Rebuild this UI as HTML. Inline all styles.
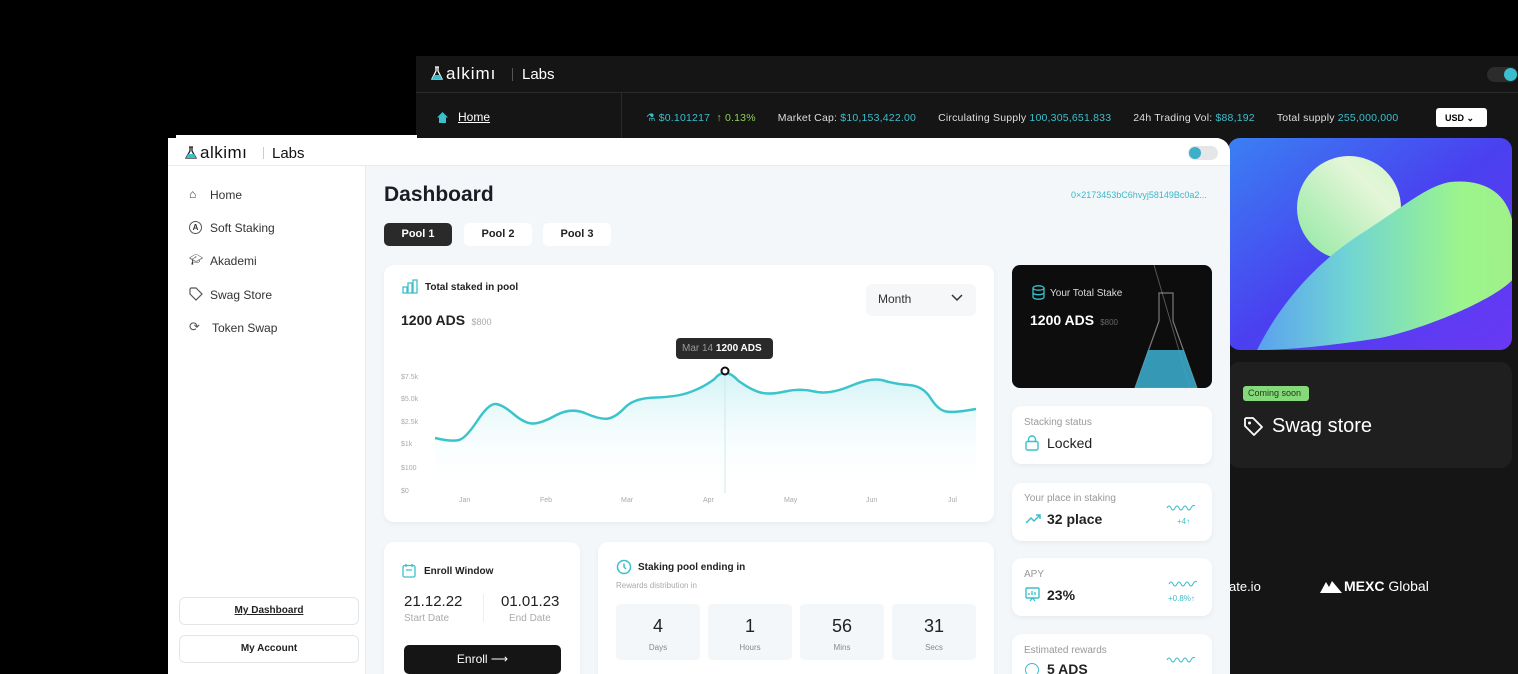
<!DOCTYPE html>
<html><head><meta charset="utf-8"><style>
*{margin:0;padding:0;box-sizing:border-box}
html,body{width:1518px;height:674px;overflow:hidden}
body{background:#000;position:relative;font-family:"Liberation Sans",sans-serif}
.a{position:absolute}
.t{position:absolute;white-space:nowrap}
.card{position:absolute;background:#fff;border-radius:10px;box-shadow:0 2px 6px rgba(0,0,0,.05)}
.tl{color:#3bbfcc}
.tk span.g{display:inline-block;width:22px}
</style></head><body>
<!-- dark window -->
<div class="a" style="left:416px;top:56px;width:1102px;height:618px;background:#151515"></div>
<div class="a" style="left:416px;top:92px;width:1102px;height:1px;background:#2a2a2a"></div>
<div class="a" style="left:621px;top:92px;width:1px;height:46px;background:#2a2a2a"></div>
<svg class="a" style="left:431px;top:66px" width="12" height="14"><path d="M4 1h4M5 1v4L1 13h10L7 5V1" fill="none" stroke="#fff" stroke-width="1.3"/><path d="M3 9h6l2 4H1z" fill="#3bbfcc"/></svg>
<div class="t" style="left:446px;top:64px;font-size:17px;color:#fff;letter-spacing:1px">alkimı</div>
<div class="a" style="left:512px;top:68px;width:1px;height:13px;background:#555"></div>
<div class="t" style="left:522px;top:66px;font-size:15px;color:#fff">Labs</div>
<div class="a" style="left:1487px;top:67px;width:31px;height:15px;border-radius:8px;background:#2c2c2c"></div>
<div class="a" style="left:1504px;top:68px;width:13px;height:13px;border-radius:50%;background:#3bbfcc"></div>
<svg class="a" style="left:436px;top:111px" width="13" height="13"><path d="M6.5 1L1 6.5h2V12h7V6.5h2z" fill="#3bbfcc"/></svg>
<div class="t" style="left:458px;top:110px;font-size:12px;color:#fff;text-decoration:underline">Home</div>
<div class="t tk" style="left:646px;top:112px;font-size:10.5px;color:#ddd;letter-spacing:.2px"><span class="tl">⚗ $0.101217</span> <span style="color:#8fcf5a">&nbsp;↑ 0.13%</span><span class="g"></span>Market Cap: <span class="tl">$10,153,422.00</span><span class="g"></span>Circulating Supply <span class="tl">100,305,651.833</span><span class="g"></span>24h Trading Vol: <span class="tl">$88,192</span><span class="g"></span>Total supply <span class="tl">255,000,000</span></div>
<div class="a" style="left:1436px;top:108px;width:51px;height:19px;background:#fff;border-radius:3px;font-size:9px;color:#000;padding:5px 0 0 9px;font-weight:bold">USD &#8964;</div>
<!-- gradient card -->
<svg class="a" style="left:1228px;top:138px" width="284" height="212">
<defs>
<linearGradient id="bg" x1="0" y1="0" x2="1" y2="1"><stop offset="0" stop-color="#3a80f2"/><stop offset=".5" stop-color="#4a40f0"/><stop offset="1" stop-color="#6a38f5"/></linearGradient>
<linearGradient id="c1" x1="0" y1="1" x2="1" y2="0"><stop offset="0" stop-color="#8ee8a0"/><stop offset=".7" stop-color="#e4f6d8"/><stop offset="1" stop-color="#d0f4c8"/></linearGradient>
<linearGradient id="b1" x1="0" y1="0" x2="1" y2="0"><stop offset="0" stop-color="#5aa0f0"/><stop offset=".35" stop-color="#70d4d4"/><stop offset=".8" stop-color="#9cf58c"/><stop offset="1" stop-color="#a0f08a"/></linearGradient>
<clipPath id="cp"><rect width="284" height="212" rx="12"/></clipPath>
</defs>
<g clip-path="url(#cp)">
<rect width="284" height="212" fill="url(#bg)"/>
<circle cx="121" cy="70" r="52" fill="url(#c1)"/>
<path d="M29,212 C50,170 85,125 139,92 C180,65 200,48 222,44 C262,40 286,60 286,100 L286,140 C270,160 200,190 152,200 C100,208 60,212 29,212Z" fill="url(#b1)"/>
</g></svg>
<div class="a" style="left:1228px;top:362px;width:284px;height:106px;border-radius:12px;background:#1f1f1f"></div>
<div class="a" style="left:1243px;top:386px;width:66px;height:15px;border-radius:3px;background:#86d97a;font-size:9px;color:#1a3a10;padding:2px 0 0 5px">Coming soon</div>
<svg class="a" style="left:1243px;top:416px" width="21" height="21"><path d="M2 3v7l9 9 8-8-9-9H3z" fill="none" stroke="#fff" stroke-width="1.8" stroke-linejoin="round"/><circle cx="6.5" cy="7" r="1.5" fill="#fff"/></svg>
<div class="t" style="left:1272px;top:415px;font-size:20px;color:#fff">Swag store</div>
<div class="t" style="left:1229px;top:579px;font-size:13px;color:#fff">ate.io</div>
<svg class="a" style="left:1320px;top:580px" width="22" height="13"><path d="M0 13L6 2l3 5 3-6 10 12z" fill="#fff"/></svg>
<div class="t" style="left:1344px;top:578px;font-size:14px;color:#fff"><b>MEXC</b> Global</div>
<!-- white app -->
<div class="a" style="left:168px;top:138px;width:1062px;height:536px;background:#f3f7f9;border-radius:0 14px 0 0;overflow:hidden">
<div class="a" style="left:0;top:0;width:1062px;height:28px;background:#fff;border-bottom:1px solid #e8eced"></div>
<div class="a" style="left:0;top:28px;width:198px;height:508px;background:#fff;border-right:1px solid #e8eced"></div>
</div>
<div class="a" style="left:176px;top:135px;width:241px;height:4px;background:#fff"></div>
<svg class="a" style="left:185px;top:146px" width="12" height="13"><path d="M4 1h4M5 1v4L1 12h10L7 5V1" fill="none" stroke="#222" stroke-width="1.3"/><path d="M3 8h6l2 4H1z" fill="#3bbfcc"/></svg>
<div class="t" style="left:200px;top:143px;font-size:17px;color:#111;letter-spacing:.5px">alkimı</div>
<div class="a" style="left:263px;top:147px;width:1px;height:12px;background:#ccc"></div>
<div class="t" style="left:272px;top:145px;font-size:15px;color:#111">Labs</div>
<div class="a" style="left:1188px;top:146px;width:30px;height:14px;border-radius:7px;background:#e4e6e8"></div>
<div class="a" style="left:1189px;top:147px;width:12px;height:12px;border-radius:50%;background:#3bb0c8"></div>
<!-- sidebar -->
<div style="font-size:12px;color:#333">
<div class="t" style="left:189px;top:187px">⌂</div><div class="t" style="left:210px;top:188px">Home</div>
<div class="a" style="left:189px;top:221px;width:13px;height:13px;border:1.2px solid #555;border-radius:50%;font-size:8px;text-align:center;line-height:11px;font-weight:bold">A</div><div class="t" style="left:210px;top:221px">Soft Staking</div>
<div class="t" style="left:189px;top:253px;font-size:11px">🎓︎</div><div class="t" style="left:210px;top:254px">Akademi</div>
<svg class="a" style="left:189px;top:287px" width="14" height="14"><path d="M1 2v5l6 6 6-6-6-6H2z" fill="none" stroke="#555" stroke-width="1.2"/></svg><div class="t" style="left:210px;top:288px">Swag Store</div>
<div class="t" style="left:189px;top:319px;font-size:13px;color:#555">⟳</div><div class="t" style="left:212px;top:321px">Token Swap</div>
</div>
<div class="a" style="left:179px;top:597px;width:180px;height:28px;border:1px solid #e3e6e8;border-radius:6px;font-size:10px;font-weight:bold;text-align:center;line-height:26px;color:#222;text-decoration:underline">My Dashboard</div>
<div class="a" style="left:179px;top:635px;width:180px;height:28px;border:1px solid #e3e6e8;border-radius:6px;font-size:10px;font-weight:bold;text-align:center;line-height:26px;color:#222">My Account</div>
<!-- main -->
<div class="t" style="left:384px;top:183px;font-size:21px;font-weight:bold;color:#1a1d24">Dashboard</div>
<div class="t" style="left:1071px;top:190px;font-size:9px;color:#3bb8c8">0×2173453bC6hvyj58149Bc0a2...</div>
<div class="a" style="left:384px;top:223px;width:68px;height:23px;border-radius:5px;background:#2a2a2a;color:#fff;font-size:11px;font-weight:bold;text-align:center;line-height:23px">Pool 1</div>
<div class="a" style="left:464px;top:223px;width:68px;height:23px;border-radius:5px;background:#fff;color:#222;font-size:11px;font-weight:bold;text-align:center;line-height:23px">Pool 2</div>
<div class="a" style="left:543px;top:223px;width:68px;height:23px;border-radius:5px;background:#fff;color:#222;font-size:11px;font-weight:bold;text-align:center;line-height:23px">Pool 3</div>
<!-- chart card -->
<div class="card" style="left:384px;top:265px;width:610px;height:257px"></div>
<svg class="a" style="left:402px;top:279px" width="16" height="15"><path d="M1 14V8h4v6zM6 14V4h4v10zM11 14V1h4v13z" fill="none" stroke="#3bbfcc" stroke-width="1.3"/></svg>
<div class="t" style="left:425px;top:282px;font-size:10px;font-weight:bold;color:#222">Total staked in pool</div>
<div class="t" style="left:401px;top:312px;font-size:14px;font-weight:bold;color:#222">1200 ADS <span style="font-size:9px;color:#aaa;font-weight:normal">&nbsp;$800</span></div>
<div class="a" style="left:866px;top:284px;width:110px;height:32px;border-radius:6px;background:#f5f7f8"></div>
<div class="t" style="left:878px;top:292px;font-size:12px;color:#333">Month</div>
<svg class="a" style="left:951px;top:294px" width="12" height="8"><path d="M1 1l5 5 5-5" fill="none" stroke="#333" stroke-width="1.5"/></svg>
<svg class="a" style="left:0;top:0" width="1518" height="674">
<defs><linearGradient id="g" x1="0" y1="0" x2="0" y2="1"><stop offset="0" stop-color="#bfeef2" stop-opacity=".7"/><stop offset="1" stop-color="#fff" stop-opacity="0"/></linearGradient></defs>
<path d="M435,438 Q452,442 459,440 Q466,438 477.5,420.5 Q489,403 496,404 Q503,405 513.5,414 Q524,423 532,423.5 Q540,424 555.5,415.5 Q571,407 586,413.5 Q601,420 608.5,418.5 Q616,417 625,407.5 Q634,398 655.5,397.5 Q677,397 690.5,392 Q704,387 714.5,379 Q725,366 738,380.5 Q751,390 760.5,392.5 Q770,395 785,391.5 Q800,388 814.5,391.5 Q829,395 850.5,386 Q872,377 883.5,380.5 Q895,384 909,385 Q923,386 930.5,398 Q938,410 946,411.5 Q954,413 976,409 L976,492 L435,492Z" fill="url(#g)"/>
<path d="M435,438 Q452,442 459,440 Q466,438 477.5,420.5 Q489,403 496,404 Q503,405 513.5,414 Q524,423 532,423.5 Q540,424 555.5,415.5 Q571,407 586,413.5 Q601,420 608.5,418.5 Q616,417 625,407.5 Q634,398 655.5,397.5 Q677,397 690.5,392 Q704,387 714.5,379 Q725,366 738,380.5 Q751,390 760.5,392.5 Q770,395 785,391.5 Q800,388 814.5,391.5 Q829,395 850.5,386 Q872,377 883.5,380.5 Q895,384 909,385 Q923,386 930.5,398 Q938,410 946,411.5 Q954,413 976,409" fill="none" stroke="#3cc4cc" stroke-width="2.5"/>
<line x1="725" y1="372" x2="725" y2="493" stroke="#cfe9ec" stroke-width="1"/>
<circle cx="725" cy="371" r="3.5" fill="#fff" stroke="#111" stroke-width="2"/>
<g font-family="Liberation Sans" font-size="7" fill="#aaa"><text x="401" y="379">$7.5k</text><text x="401" y="401">$5.0k</text><text x="401" y="424">$2.5k</text><text x="401" y="446">$1k</text><text x="401" y="470">$100</text><text x="401" y="493">$0</text>
<text x="459" y="502">Jan</text><text x="540" y="502">Feb</text><text x="621" y="502">Mar</text><text x="703" y="502">Apr</text><text x="784" y="502">May</text><text x="866" y="502">Jun</text><text x="948" y="502">Jul</text></g>
</svg>
<div class="a" style="left:676px;top:338px;width:97px;height:21px;border-radius:4px;background:#2a2a2a;font-size:10px;color:#999;padding:5px 0 0 6px;white-space:nowrap">Mar 14 <b style="color:#fff">1200 ADS</b></div>
<!-- enroll -->
<div class="card" style="left:384px;top:542px;width:196px;height:150px"></div>
<svg class="a" style="left:402px;top:563px" width="14" height="15"><rect x="1" y="2.5" width="12" height="11.5" rx="1.5" fill="none" stroke="#3bbfcc" stroke-width="1.3"/><path d="M4 1v3M10 1v3M4 7h6" stroke="#3bbfcc" stroke-width="1.3"/></svg>
<div class="t" style="left:424px;top:566px;font-size:10px;font-weight:bold;color:#222">Enroll Window</div>
<div class="t" style="left:404px;top:593px;font-size:15px;color:#222">21.12.22</div>
<div class="t" style="left:404px;top:613px;font-size:10px;color:#aaa">Start Date</div>
<div class="a" style="left:483px;top:594px;width:1px;height:28px;background:#eee"></div>
<div class="t" style="left:501px;top:593px;font-size:15px;color:#222">01.01.23</div>
<div class="t" style="left:509px;top:613px;font-size:10px;color:#aaa">End Date</div>
<div class="a" style="left:404px;top:645px;width:157px;height:29px;border-radius:5px;background:#151515;color:#fff;font-size:12px;text-align:center;line-height:29px">Enroll &#10230;</div>
<!-- staking pool -->
<div class="card" style="left:598px;top:542px;width:396px;height:150px"></div>
<svg class="a" style="left:616px;top:559px" width="16" height="16"><circle cx="8" cy="8" r="6.5" fill="none" stroke="#3bbfcc" stroke-width="1.5"/><path d="M8 4.5V8l2 2" fill="none" stroke="#3bbfcc" stroke-width="1.5"/></svg>
<div class="t" style="left:638px;top:562px;font-size:10px;font-weight:bold;color:#222">Staking pool ending in</div>
<div class="t" style="left:616px;top:581px;font-size:8px;color:#aaa">Rewards distribution in</div>
<div class="a" style="left:616px;top:604px;width:84px;height:56px;background:#f3f7f9;border-radius:4px;text-align:center"><div style="font-size:18px;color:#222;margin-top:12px">4</div><div style="font-size:8px;color:#888;margin-top:6px">Days</div></div>
<div class="a" style="left:708px;top:604px;width:84px;height:56px;background:#f3f7f9;border-radius:4px;text-align:center"><div style="font-size:18px;color:#222;margin-top:12px">1</div><div style="font-size:8px;color:#888;margin-top:6px">Hours</div></div>
<div class="a" style="left:800px;top:604px;width:84px;height:56px;background:#f3f7f9;border-radius:4px;text-align:center"><div style="font-size:18px;color:#222;margin-top:12px">56</div><div style="font-size:8px;color:#888;margin-top:6px">Mins</div></div>
<div class="a" style="left:892px;top:604px;width:84px;height:56px;background:#f3f7f9;border-radius:4px;text-align:center"><div style="font-size:18px;color:#222;margin-top:12px">31</div><div style="font-size:8px;color:#888;margin-top:6px">Secs</div></div>
<!-- right column -->
<div class="a" style="left:1012px;top:265px;width:200px;height:123px;border-radius:8px;background:#0d0d0d;overflow:hidden">
<svg class="a" style="left:118px;top:0" width="82" height="123"><path d="M24 0L60 123" stroke="#555" stroke-width="1"/><path d="M29 28h14v28l24 67H5l24-67z" fill="none" stroke="#aaa" stroke-width="1.2" opacity=".7"/><path d="M18 85h36l13 38H5z" fill="#3aa8c8" opacity=".9"/></svg>
</div>
<svg class="a" style="left:1032px;top:285px" width="13" height="15"><ellipse cx="6.5" cy="3" rx="5.5" ry="2.2" fill="none" stroke="#3bbfcc" stroke-width="1.3"/><path d="M1 3v9c0 1.3 2.5 2.2 5.5 2.2S12 13.3 12 12V3M1 7.5c0 1.3 2.5 2.2 5.5 2.2S12 8.8 12 7.5" fill="none" stroke="#3bbfcc" stroke-width="1.3"/></svg>
<div class="t" style="left:1050px;top:288px;font-size:10px;color:#ddd">Your Total Stake</div>
<div class="t" style="left:1030px;top:312px;font-size:14px;font-weight:bold;color:#fff">1200 ADS <span style="font-size:8px;color:#666;font-weight:normal">&nbsp;$800</span></div>

<div class="card" style="left:1012px;top:406px;width:200px;height:58px"></div>
<div class="t" style="left:1024px;top:417px;font-size:10px;color:#999">Stacking status</div>
<svg class="a" style="left:1025px;top:435px" width="14" height="16"><rect x="1" y="6.5" width="12" height="8.5" rx="1.5" fill="none" stroke="#3bbfcc" stroke-width="1.4"/><path d="M3.5 6.5V4.5a3.5 3.5 0 017 0v2" fill="none" stroke="#3bbfcc" stroke-width="1.4"/></svg>
<div class="t" style="left:1047px;top:435px;font-size:14px;color:#222">Locked</div>

<div class="card" style="left:1012px;top:483px;width:200px;height:58px"></div>
<div class="t" style="left:1024px;top:493px;font-size:10px;color:#999">Your place in staking</div>
<svg class="a" style="left:1025px;top:513px" width="16" height="11"><path d="M1 10l5-5 3 3 6-6M11 2h4v4" fill="none" stroke="#3bbfcc" stroke-width="1.5"/></svg>
<div class="t" style="left:1047px;top:511px;font-size:14px;color:#222;font-weight:bold">32 place</div>
<svg class="a" style="left:1166px;top:503px" width="30" height="8"><path d="M1 5q2-4 4 0t4 0 4 0 4 0 4 0 4 0 4-2" fill="none" stroke="#3bbfcc" stroke-width="1"/></svg>
<div class="t" style="left:1177px;top:517px;font-size:8px;color:#3bbfcc">+4↑</div>

<div class="card" style="left:1012px;top:558px;width:200px;height:58px"></div>
<div class="t" style="left:1024px;top:569px;font-size:10px;color:#999">APY</div>
<svg class="a" style="left:1025px;top:587px" width="15" height="15"><rect x="1" y="1" width="13" height="10" rx="1" fill="none" stroke="#3bbfcc" stroke-width="1.4"/><path d="M4 8V6M7 8V4M10 8V5M5 14l2.5-3 2.5 3" fill="none" stroke="#3bbfcc" stroke-width="1.3"/></svg>
<div class="t" style="left:1047px;top:587px;font-size:14px;color:#222;font-weight:bold">23%</div>
<svg class="a" style="left:1168px;top:579px" width="30" height="8"><path d="M1 5q2-4 4 0t4 0 4 0 4 0 4 0 4 0 4-2" fill="none" stroke="#3bbfcc" stroke-width="1"/></svg>
<div class="t" style="left:1168px;top:594px;font-size:8px;color:#3bbfcc">+0.8%↑</div>

<div class="card" style="left:1012px;top:634px;width:200px;height:58px"></div>
<div class="t" style="left:1024px;top:645px;font-size:10px;color:#999">Estimated rewards</div>
<div class="a" style="left:1025px;top:663px;width:14px;height:14px;border:1.4px solid #3bbfcc;border-radius:50%"></div>
<div class="t" style="left:1047px;top:661px;font-size:14px;color:#222;font-weight:bold">5 ADS</div>
<svg class="a" style="left:1166px;top:655px" width="30" height="8"><path d="M1 5q2-4 4 0t4 0 4 0 4 0 4 0 4 0 4-2" fill="none" stroke="#3bbfcc" stroke-width="1"/></svg>
</body></html>
